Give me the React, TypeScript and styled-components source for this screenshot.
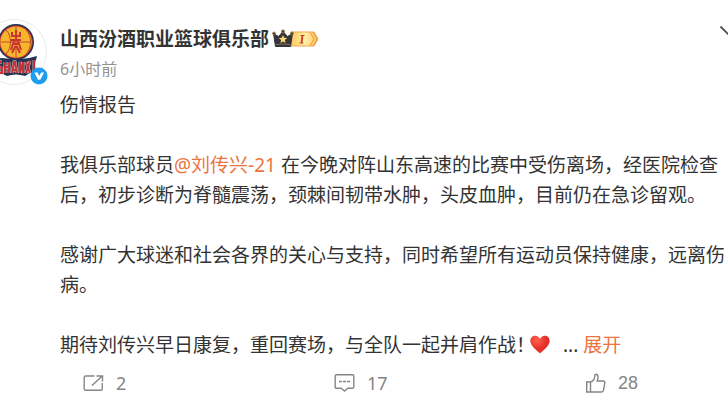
import React from "react";
import styled, { createGlobalStyle } from "styled-components";

const GlobalStyle = createGlobalStyle`
  * { box-sizing: border-box; }
  body {
    margin: 0;
    overflow-x: hidden;
    background: #fff;
    color: #333;
    font-family: "Noto Sans", "Noto Sans CJK SC", sans-serif;
  }
`;

const Post = styled.article`
  display: grid;
  grid-template-columns: 47px minmax(0, 1fr);
  column-gap: 13px;
  padding-top: 19px;
  overflow: hidden;
`;

const AvatarLink = styled.a`
  position: relative;
  display: flex;
  justify-content: flex-end;
  height: 66px;
`;

const AvatarDrawing = styled.svg`
  flex: none;
  width: 66px;
  height: 66px;
`;

const VerifiedBadge = styled.svg`
  position: absolute;
  right: -1px;
  bottom: 0;
  width: 18px;
  height: 18px;
`;

const Header = styled.header`
  display: flex;
  align-items: flex-start;
  height: 66px;
`;

const Author = styled.div`
  flex: 1;
  padding-top: 5px;
`;

const NameRow = styled.div`
  display: flex;
  align-items: center;
  gap: 3px;
  height: 30px;
`;

const Name = styled.a`
  color: #333;
  font-size: 19px;
  font-weight: 700;
  line-height: 30px;
  text-decoration: none;
`;

const LevelBadge = styled.svg`
  width: 48px;
  height: 20px;
`;

const Time = styled.time`
  display: block;
  color: #939393;
  font-size: 16px;
  line-height: 30px;
`;

const MoreButton = styled.button`
  display: flex;
  margin: 6px -9px 0 0;
  padding: 0;
  border: 0;
  background: none;
`;

const Body = styled.div`
  display: grid;
  row-gap: 30px;
  padding-top: 5px;
  font-size: 19px;
  line-height: 30px;
`;

const Paragraph = styled.p`
  margin: 0;
`;

const TextLink = styled.a`
  color: #eb7340;
  text-decoration: none;
`;

const Heart = styled.svg`
  width: 20px;
  height: 19px;
  margin: 0 8px 0 -5px;
  vertical-align: -2px;
`;

const Actions = styled.footer`
  grid-column: 1 / -1;
  display: grid;
  grid-template-columns: 1fr 1fr auto;
  padding: 8px 90px 0 83px;
`;

const Action = styled.button<{ $sans?: boolean }>`
  display: flex;
  align-items: center;
  justify-self: start;
  gap: 12px;
  height: 30px;
  padding: 0;
  border: 0;
  background: none;
  color: #858585;
  font-family: ${(p) => (p.$sans ? '"Liberation Sans", sans-serif' : '"Noto Sans", sans-serif')};
  font-size: 18px;
`;

const ActionIcon = styled.svg`
  width: 21px;
  height: 20px;
  fill: none;
  stroke: #858585;
  stroke-width: 1.4;
`;

const LETTERS =
  "M21 43h-4v4l4 2v5h-5M24 43v11M28 43v11M24 48h4M31 54l2-11h1l2 11M32 51h3M39 54V43l3 11V43M45 43l4 11M49 42l-4 12M53 41v12";

function Avatar() {
  return (
    <AvatarLink href="#profile" aria-label="山西汾酒职业篮球俱乐部">
      <AvatarDrawing viewBox="0 0 66 66" aria-hidden="true">
        <circle cx="33" cy="33" r="32.5" fill="#fff" stroke="#e9e9e9" />
        <circle cx="35" cy="23" r="18" fill="#223354" />
        <circle cx="35" cy="23" r="16.6" fill="#c93531" />
        <circle cx="35" cy="23" r="15.6" fill="#f5b52d" />
        <g fill="none" stroke="#c24a2e" strokeWidth="1">
          <path d="M20 23h30M35 8v30M25 11c6 6 6 18 0 24M45 11c6 6 6 18 0 24" />
        </g>
        <path
          d="M31 13v4h8v-4M35 11v10M30 21h10M33 25h4M30 31l3-9M40 31l-3-9M31 34l3-6h2l3 6"
          fill="none"
          stroke="#c93531"
          strokeWidth="2"
        />
        <path d="M12 40l9-1q14 2 27 0l8-2-2 8 1 10-6-1-5 3q-9-3-18 0l-6-3-8 1 2-7z" fill="#263354" />
        <path d={LETTERS} fill="none" stroke="#ead9d5" strokeWidth="2.8" />
        <path d={LETTERS} fill="none" stroke="#c43235" strokeWidth="2.1" />
      </AvatarDrawing>
      <VerifiedBadge viewBox="0 0 18 18" aria-hidden="true">
        <circle cx="9" cy="9" r="8.5" fill="#1e9df0" />
        <path d="M4.4 5.4l3.2.1L9.2 9l1.9-3.5 3 .1-3.8 7.2H8z" fill="#fff" />
      </VerifiedBadge>
    </AvatarLink>
  );
}

function MembershipLevel() {
  return (
    <LevelBadge viewBox="0 0 48 20" role="img" aria-label="会员等级 I">
      <defs>
        <linearGradient id="gold" x2="1">
          <stop offset="0" stopColor="#ffc85a" />
          <stop offset="0.5" stopColor="#fff0aa" />
          <stop offset="1" stopColor="#ffc75c" />
        </linearGradient>
      </defs>
      <path d="M19 3h23l4 7-4 7H19z" fill="url(#gold)" stroke="#f5a54b" />
      <path d="M38 3l4 7-4 7M41 3l4 7-4 7" fill="none" stroke="#e9964a" strokeWidth="1" />
      <path d="M28.500 6.500h4M27.500 14h4" stroke="#cf3a22" strokeWidth="1.2" />
      <path d="M30.500 6.500l-1 7.500" stroke="#cf3a22" strokeWidth="1.8" />
      <path d="M1.500 4.500l5 3 4.500-5 4.500 5 5-3-2 13h-15z" fill="#353439" stroke="#353439" strokeLinejoin="round" />
      <g fill="#494237" stroke="#a87c36" strokeWidth=".6">
        <circle cx="11" cy="2.400" r="1.600" />
        <circle cx="2" cy="4.400" r="1.500" />
        <circle cx="20" cy="4.400" r="1.500" />
      </g>
      <path d="M4 15.500q7-1 14 0" fill="none" stroke="#88714d" />
      <path d="M11 6l1.200 2.800 3 .2-2.300 2 .7 3-2.600-1.600L8.400 14l.7-3-2.300-2 3-.2z" fill="#ffd575" />
    </LevelBadge>
  );
}

export default function App() {
  return (
    <>
      <GlobalStyle />
      <Post>
        <Avatar />
        <Header>
          <Author>
            <NameRow>
              <Name href="#profile">山西汾酒职业篮球俱乐部</Name>
              <MembershipLevel />
            </NameRow>
            <Time>6小时前</Time>
          </Author>
          <MoreButton aria-label="更多">
            <svg width="18" height="12" viewBox="0 0 18 12" fill="none" stroke="#505050" strokeWidth="1.8">
              <path d="M1.500 1.500L9 9l7.500-7.500" />
            </svg>
          </MoreButton>
        </Header>
        <span />
        <Body>
          <Paragraph>伤情报告</Paragraph>
          <Paragraph>
            我俱乐部球员<TextLink href="#player">@刘传兴-21</TextLink>{" "}
            在今晚对阵山东高速的比赛中受伤离场，经医院检查后，初步诊断为脊髓震荡，颈棘间韧带水肿，头皮血肿，目前仍在急诊留观。
          </Paragraph>
          <Paragraph>
            感谢广大球迷和社会各界的关心与支持，同时希望所有运动员保持健康，远离伤病。
          </Paragraph>
          <Paragraph>
            期待刘传兴早日康复，重回赛场，与全队一起并肩作战！
            <Heart viewBox="0 0 20 19" role="img" aria-label="爱心">
              <defs>
                <radialGradient id="heart" cx="35%" cy="25%">
                  <stop offset="0" stopColor="#ff604d" />
                  <stop offset="1" stopColor="#e52f29" />
                </radialGradient>
              </defs>
              <path d="M10 18.500C7 15.500.3 11 .3 5.800.3 2.700 2.600.7 5.300.7c2.200 0 3.900 1.400 4.700 3.200C10.800 2.100 12.500.7 14.700.7c2.700 0 5 2 5 5.100 0 5.200-6.700 9.700-9.700 12.700z" fill="url(#heart)" />
            </Heart>{" "}
            ... <TextLink href="#expand">展开</TextLink>
          </Paragraph>
        </Body>
        <Actions>
          <Action aria-label="转发 2">
            <ActionIcon viewBox="0 0 21 20">
              <path d="M11.500 3H2.700Q1.200 3 1.200 4.500v11.200q0 1.500 1.500 1.500h15.100q1.500 0 1.500-1.500V10M9 12.500l10-9.300M13.500 3h6v5.500" />
            </ActionIcon>
            2
          </Action>
          <Action aria-label="评论 17">
            <ActionIcon viewBox="0 0 21 20">
              <path d="M2.500 1.700h16q1.300 0 1.300 1.300v11q0 1.300-1.300 1.300h-4.700L10.500 18l-3.300-2.700H2.500Q1.200 15.300 1.200 14V3q0-1.300 1.300-1.300z" />
              <path d="M5 8.500h3M9 8.500h3M13 8.500h3" strokeWidth="1.600" />
            </ActionIcon>
            17
          </Action>
          <Action $sans aria-label="赞 28">
            <ActionIcon viewBox="0 0 21 20">
              <path d="M1.700 9h3.800v10H1.700zM5.500 9c3-1 4.300-3 4.300-6C9.800 1.700 10.300 1.200 11 1.200c1.300 0 2 1.200 2 2.800 0 1.500-.3 2.700-.8 4h6c1.200 0 1.800.8 1.600 1.900l-1.300 7.300c-.2 1.100-.9 1.800-2 1.800h-11" />
            </ActionIcon>
            28
          </Action>
        </Actions>
      </Post>
    </>
  );
}
